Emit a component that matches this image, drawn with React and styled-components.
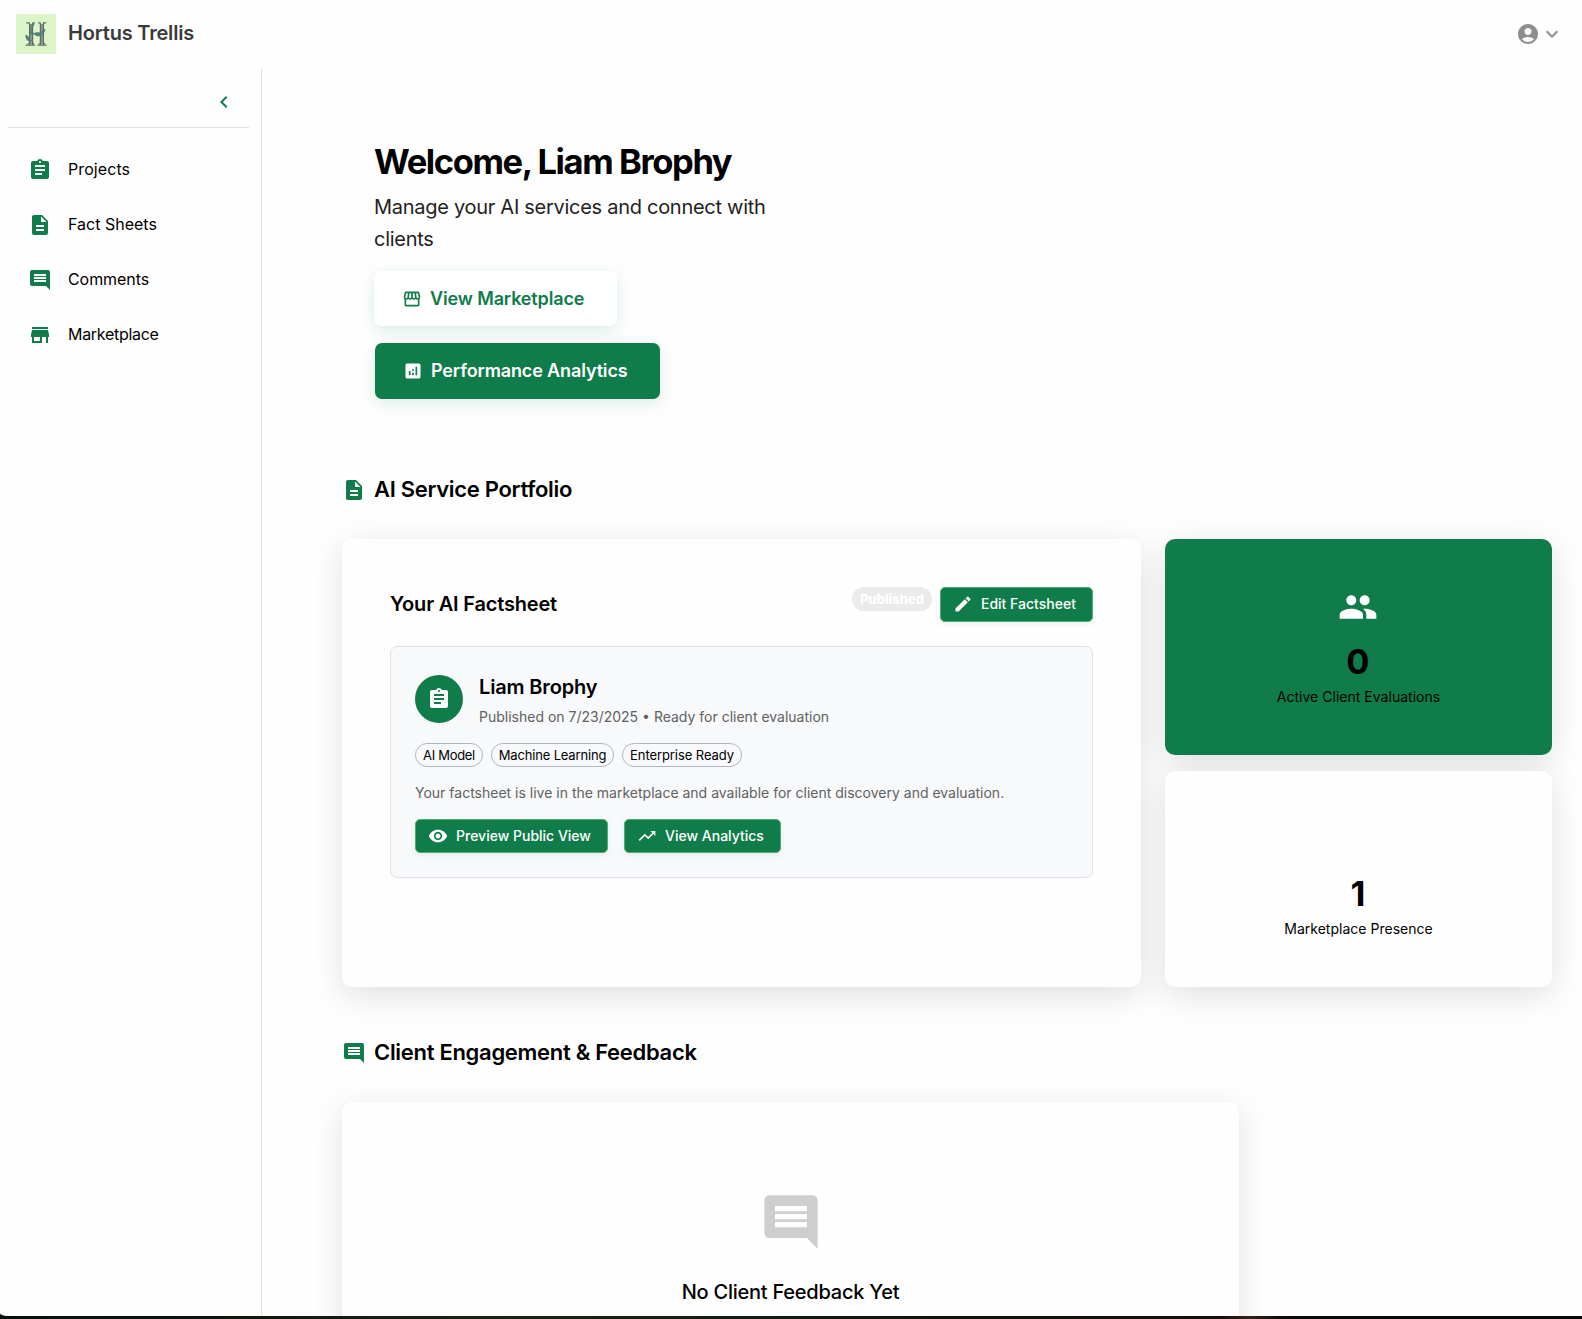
import React from "react";
import styled, { createGlobalStyle } from "styled-components";
import {
  MdAccountCircle, MdAnalytics, MdAssignment, MdChevronLeft, MdComment, MdDescription, MdEdit,
  MdKeyboardArrowDown, MdOutlineStorefront, MdPeople, MdStore, MdTrendingUp, MdVisibility,
} from "react-icons/md";

const green = "#0f7c4a";

const Global = createGlobalStyle`
  * { box-sizing: border-box; }
  body { margin: 0; background: #fefefe; overflow: hidden; font-family: Inter, "Liberation Sans", sans-serif; color: #000; }
  h1, h2, h3, p { margin: 0; }
  svg { display: block; flex: none; }
`;

const Screen = styled.div`
  display: flex; flex-direction: column; height: 1319px;
  background: linear-gradient(90deg, #04110f 0, #0c1710 15%, #1a2411 32%, #10130b 60%, #160e08 77%, #3a2013 79%, #0d0a09 81%, #060708 100%);
`;
const Window = styled.div`
  height: 1316px; background: #fefefe; border-bottom-left-radius: 7px 3px; overflow: hidden;
  display: flex; flex-direction: column;
`;
const TopBar = styled.header`
  height: 69px; flex: none; padding: 14px 18px 15px 16px; display: flex; align-items: center;
`;
const Brand = styled.div`
  font-size: 20px; font-weight: 600; letter-spacing: -0.2px; color: #3a3a3a;
  margin-left: 12px; line-height: 24px; padding-bottom: 2px;
`;
const Account = styled.div`
  margin-left: auto; display: flex; align-items: center; color: #8e8e8e;
`;
const Body = styled.div`display: flex; flex: 1; min-height: 0;`;
const Sidebar = styled.aside`
  width: 262px; flex: none; border-right: 1px solid #e0e0e0; padding: 0 12px 0 8px;
`;
const Collapse = styled.div`
  height: 59px; border-bottom: 1px solid #e0e0e0; display: flex; justify-content: flex-end;
  padding: 21px 13px 0 0; color: ${green};
`;
const Nav = styled.nav`padding-top: 14px;`;
const NavItem = styled.a`
  height: 55px; display: flex; align-items: center; gap: 16px; padding-left: 20px;
  font: 400 16px/24px Inter, sans-serif; letter-spacing: ${(p) => p.$ls || 0}px;
  svg { color: ${green}; }
`;
const NavLabel = styled.span`padding-bottom: 2px;`;
const Main = styled.main`flex: 1; min-width: 0; padding: 72px 30px 0 80px;`;
const Hero = styled.section`padding-left: 32px; width: 460px;`;
const Title = styled.h1`font-size: 34.5px; line-height: 42px; font-weight: 700; letter-spacing: -1.4px; white-space: nowrap;`;
const Lead = styled.p`font-size: 20px; line-height: 32px; color: #222; margin-top: 8px; width: 410px; letter-spacing: -0.28px;`;
const HeroButton = styled.button`
  display: flex; align-items: center; gap: 8px; border: 0; border-radius: 7px; height: ${(p) => p.$h}px; width: ${(p) => p.$w}px;
  padding: 0 0 0 28px; margin: ${(p) => p.$m};
  font: 600 18px/24px Inter, sans-serif; letter-spacing: -0.13px; white-space: nowrap;
  color: ${(p) => (p.$solid ? "#fff" : green)}; background: ${(p) => (p.$solid ? green : "#fff")};
  box-shadow: 0 4px 16px rgba(16, 125, 75, 0.15);
`;
const SectionHead = styled.div`
  display: flex; align-items: center; gap: 8px; height: 32px; margin-top: ${(p) => p.$top}px; margin-bottom: 34px; color: ${green};
  svg { margin-top: 2px; }
`;
const SectionTitle = styled.h2`color: #000; font-size: 22px; line-height: 32px; font-weight: 600; letter-spacing: -0.3px;`;
const Grid = styled.div`display: grid; grid-template-columns: 799px 387px; gap: 24px; height: 448px;`;
const Card = styled.div`
  background: ${(p) => (p.$green ? green : "#fefefe")}; border-radius: 10px;
  box-shadow: 0 8px 32px rgba(0, 0, 0, 0.12);
`;
const FactCard = styled(Card)`padding: 48px 48px 0;`;
const FactHead = styled.div`display: flex; align-items: flex-start; height: 59px;`;
const FactTitle = styled.h3`font-size: 20px; font-weight: 600; line-height: 34px; margin-right: auto; letter-spacing: -0.19px;`;
const Published = styled.span`
  height: 24px; width: 80px; border-radius: 12px; background: #ebebeb; color: #fff; display: grid; place-items: center;
  font-size: 13px; font-weight: 800; line-height: 22px; margin-right: 8px;
`;
const SmallButton = styled.button`
  height: ${(p) => p.$h || 34}px; width: ${(p) => p.$w}px; border: 1px solid #55ab6d; border-radius: 5px; background: ${green}; color: #fff;
  display: flex; align-items: center; gap: 8px; padding: 0 0 1px 12px; white-space: nowrap;
  font: 450 14px/20px Inter, sans-serif; letter-spacing: 0; box-shadow: 0 2px 6px rgba(16, 125, 75, 0.1);
`;
const Panel = styled.div`
  height: 232px; border: 1px solid #dfe1e6; border-radius: 7px; background: #f8f9fb; padding: 28px 24px 0;
`;
const Person = styled.div`display: flex; gap: 16px; height: 68px;`;
const Avatar = styled.div`width: 48px; height: 48px; border-radius: 50%; background: ${green}; color: #fff; display: grid; place-items: center;`;
const Name = styled.h3`font-size: 20px; font-weight: 600; line-height: 24px; letter-spacing: -0.16px;`;
const Muted = styled.p`font-size: 14px; line-height: 20px; color: #616161; margin-top: ${(p) => p.$top}px; white-space: nowrap;`;
const Row = styled.div`display: flex; gap: ${(p) => p.$gap}px; margin-top: ${(p) => p.$top || 0}px;`;
const Chip = styled.span`
  height: 24px; width: ${(p) => p.$w}px; border: 1px solid #b3b5b8; border-radius: 12px; display: grid; place-items: center;
  font-size: 13px; line-height: 18px; padding-bottom: 1px; white-space: nowrap; letter-spacing: ${(p) => p.$ls}px;
`;
const Stats = styled.div`display: grid; grid-template-rows: 216px 216px; gap: 16px;`;
const Stat = styled(Card)`display: flex; flex-direction: column; align-items: center; padding: 48px 1px 0 0;`;
const StatIcon = styled.div`width: 40px; height: 40px; margin-right: 1px; color: #fff;`;
const Figure = styled.div`font-size: 34.5px; line-height: 42px; font-weight: 650; margin-top: 14px;`;
const StatLabel = styled.div`font-size: 14px; line-height: 20px; letter-spacing: 0.02px; margin-top: 4px; padding-left: 1px;`;
const Empty = styled(Card)`
  width: 897px; height: 400px; padding-top: 88px; display: flex; flex-direction: column; align-items: center;
  svg { color: #cecece; }
`;
const EmptyTitle = styled.h3`font-size: 20px; line-height: 32px; font-weight: 500; margin-top: 22px; letter-spacing: -0.24px;`;

function Logo() {
  return (
    <svg width="40" height="40" viewBox="0 0 40 40">
      <rect width="40" height="40" fill="#dbf5c9" />
      <path d="M15 10v20M26 10v20" stroke="#8d998b" strokeWidth="2" />
      <g stroke="#5f6864" fill="none">
        <path d="M13.6 9v22M16.6 9v22M24.4 9v22M27.4 9v22" strokeWidth="1.2" />
        <path d="M10.2 8.8h3.2M16.4 8.8h2.2M22.2 8.8h2.4M27 8.8h3.2M9.7 31.2h9.2M21.6 31.2h8.8" strokeWidth="1.3" />
        <path d="M11.5 30.2l2-1.5M18.4 30.2l-1.6-1.5M22.6 30.2l1.6-1.5M29.2 30.2l-1.8-1.5" strokeWidth="1" />
      </g>
      <path d="M17 13c-3 2-3 4 0 6s4 3 7 2 4-2 4-4M11 22c1 4 3 4 5 5" stroke="#4f817a" strokeWidth="1.3" fill="none" />
      <path d="M9.6 20.5c2.6 1 4.4 3.6 3.6 7-2.8-1-4.2-3.4-3.6-7zM14.5 12.5c.6-1.8 2-3 4-3.2.2 2.4-1.6 4-4 3.2zM18 19.5c2-1.8 6-1.6 8 .2-1.8 3.4-6 3.6-8-.2zM25.5 18.5c.6-2 2-3.2 4-3.4-.2 2.4-1.6 4.2-4 3.4zM13.5 18c1.8-1 4 0 5 2-2.2 1-4.4.2-5-2z" fill="#4f817a" />
    </svg>
  );
}

export default function App() {
  return (
    <Screen>
      <Global />
      <Window>
        <TopBar>
          <Logo />
          <Brand>Hortus Trellis</Brand>
          <Account>
            <MdAccountCircle size={24} />
            <MdKeyboardArrowDown size={24} />
          </Account>
        </TopBar>
        <Body>
          <Sidebar>
            <Collapse><MdChevronLeft size={24} /></Collapse>
            <Nav>
              <NavItem $ls={0.08}><MdAssignment size={24} /><NavLabel>Projects</NavLabel></NavItem>
              <NavItem><MdDescription size={24} /><NavLabel>Fact Sheets</NavLabel></NavItem>
              <NavItem $ls={-0.07}><MdComment size={24} /><NavLabel>Comments</NavLabel></NavItem>
              <NavItem $ls={-0.3}><MdStore size={24} /><NavLabel>Marketplace</NavLabel></NavItem>
            </Nav>
          </Sidebar>
          <Main>
            <Hero>
              <Title>Welcome, Liam Brophy</Title>
              <Lead>Manage your AI services and connect with clients</Lead>
              <HeroButton $w={243} $h={55} $m="16px 0 0 0"><MdOutlineStorefront size={20} />View Marketplace</HeroButton>
              <HeroButton $solid $w={285} $h={56} $m="17px 0 0 1px"><MdAnalytics size={20} />Performance Analytics</HeroButton>
            </Hero>
            <SectionHead $top={74}><MdDescription size={24} /><SectionTitle>AI Service Portfolio</SectionTitle></SectionHead>
            <Grid>
              <FactCard>
                <FactHead>
                  <FactTitle>Your AI Factsheet</FactTitle>
                  <Published>Published</Published>
                  <SmallButton $w={153} $h={35}><MdEdit size={20} />Edit Factsheet</SmallButton>
                </FactHead>
                <Panel>
                  <Person>
                    <Avatar><MdAssignment size={24} /></Avatar>
                    <div>
                      <Name>Liam Brophy</Name>
                      <Muted $top={8}>Published on 7/23/2025 • Ready for client evaluation</Muted>
                    </div>
                  </Person>
                  <Row $gap={8}>
                    <Chip $w={68} $ls={-0.3}>AI Model</Chip>
                    <Chip $w={123} $ls={-0.17}>Machine Learning</Chip>
                    <Chip $w={120} $ls={-0.08}>Enterprise Ready</Chip>
                  </Row>
                  <Muted $top={16}>Your factsheet is live in the marketplace and available for client discovery and evaluation.</Muted>
                  <Row $gap={16} $top={16}>
                    <SmallButton $w={193}><MdVisibility size={20} />Preview Public View</SmallButton>
                    <SmallButton $w={157}><MdTrendingUp size={20} />View Analytics</SmallButton>
                  </Row>
                </Panel>
              </FactCard>
              <Stats>
                <Stat $green><StatIcon><MdPeople size={40} /></StatIcon><Figure>0</Figure><StatLabel>Active Client Evaluations</StatLabel></Stat>
                <Stat><StatIcon /><Figure>1</Figure><StatLabel>Marketplace Presence</StatLabel></Stat>
              </Stats>
            </Grid>
            <SectionHead $top={49}><MdComment size={24} /><SectionTitle>Client Engagement &amp; Feedback</SectionTitle></SectionHead>
            <Empty><MdComment size={64} /><EmptyTitle>No Client Feedback Yet</EmptyTitle></Empty>
          </Main>
        </Body>
      </Window>
    </Screen>
  );
}
